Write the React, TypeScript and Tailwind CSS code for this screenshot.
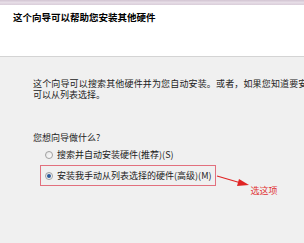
import React from "react";

const font = { fontFamily: '"Noto Sans CJK SC", "Noto Sans", sans-serif' };

const Radio = ({ checked }: { checked?: boolean }) => (
  <span className="flex h-[8px] w-[8px] shrink-0 items-center justify-center rounded-full border border-[#a0a0a0] bg-gradient-to-br from-[#e4e4e4] to-[#ffffff]">
    {checked && <span className="h-[4px] w-[4px] rounded-full bg-[#2a5a9a]" />}
  </span>
);

export default function App() {
  return (
    <div
      className="flex h-[243px] w-[304px] flex-col overflow-hidden bg-[#f0f0f0] text-[9px] leading-[11px] text-[#222]"
      style={font}
    >
      <div className="h-[5px] bg-gradient-to-b from-[#d2c4d2] via-[#e6dde6] to-[#d9cdd9]" />
      <div className="h-[52px] border-b border-[#d4d4d4] bg-white pl-[13px] pt-[7px]">
        <div className="text-[9.5px] font-bold leading-[11px] text-black">这个向导可以帮助您安装其他硬件</div>
      </div>

      <div className="pl-[33px] pt-[21px]">
        <p className="whitespace-nowrap tracking-[0.15px]">这个向导可以搜索其他硬件并为您自动安装。或者，如果您知道要安装</p>
        <p>可以从列表选择。</p>

        <p className="mt-[32px]">您想向导做什么?</p>

        <div className="mt-[4px] ml-[7px] flex flex-col">
          <div className="flex items-center gap-[4px] border border-transparent px-[4px] py-[1px]">
            <Radio />
            <span>搜索并自动安装硬件(推荐)(S)</span>
          </div>

          <div className="mt-[3px] flex items-start">
            <div className="flex items-center gap-[4px] border border-[#e2707e] px-[4px] py-[4px]">
              <Radio checked />
              <span>安装我手动从列表选择的硬件(高级)(M)</span>
            </div>
            <svg width="34" height="20" viewBox="0 0 34 20" className="mt-[9px] shrink-0">
              <line x1="1" y1="2" x2="25" y2="9" stroke="#e02424" strokeWidth="1.2" />
              <polygon points="33,11 23,5 21,12" fill="#e02424" />
            </svg>
            <span className="mt-[20px] whitespace-nowrap text-[#e03030]">选这项</span>
          </div>
        </div>
      </div>
    </div>
  );
}
